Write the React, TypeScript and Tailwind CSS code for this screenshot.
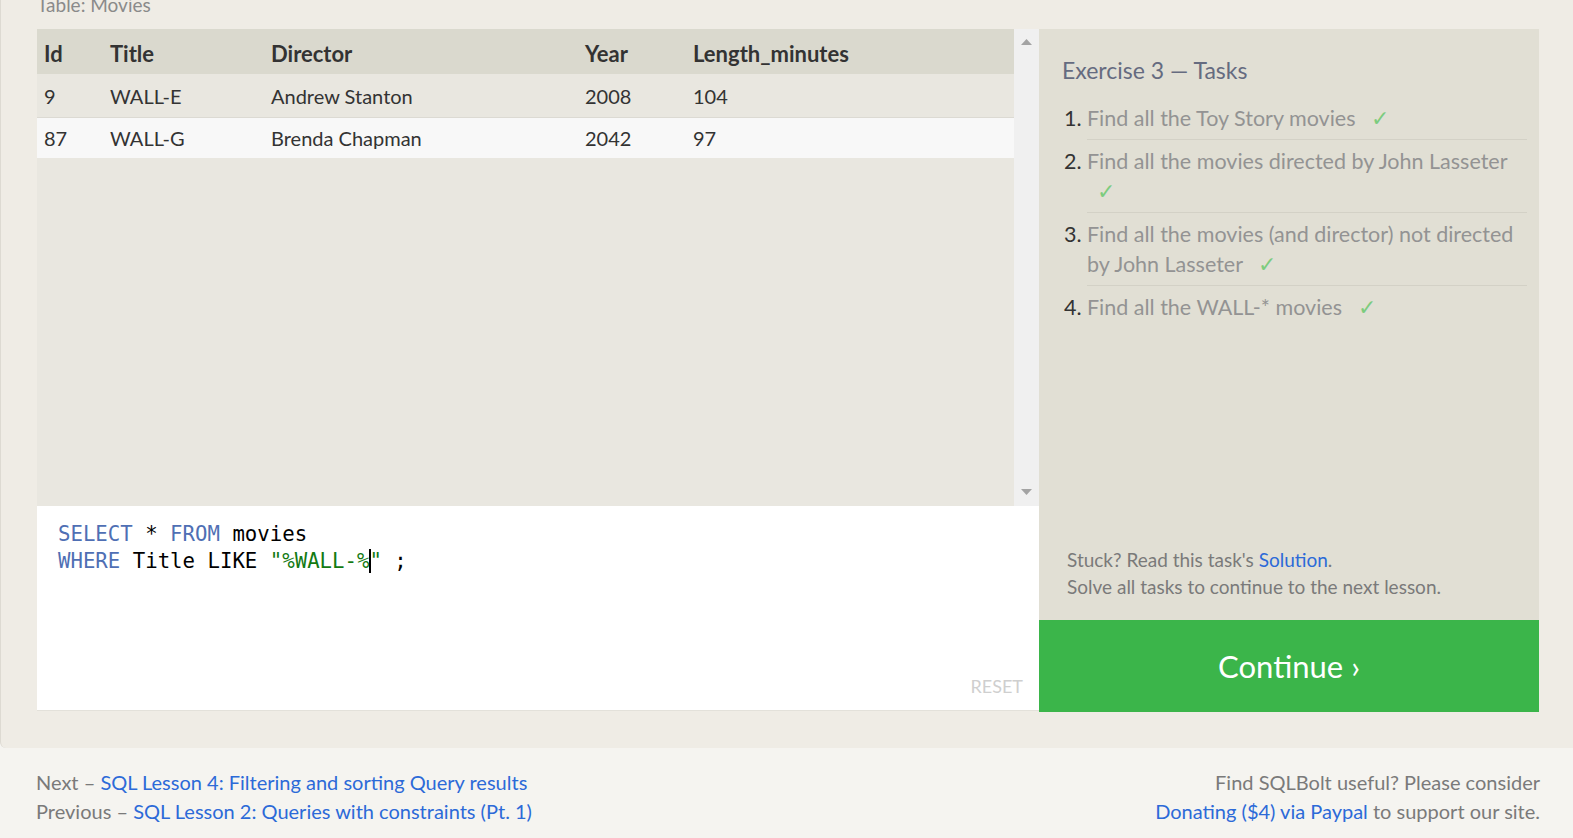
import React from "react"

const rows = [
  { id: "9", title: "WALL-E", director: "Andrew Stanton", year: "2008", len: "104" },
  { id: "87", title: "WALL-G", director: "Brenda Chapman", year: "2042", len: "97" },
]

const tasks = [
  "Find all the Toy Story movies",
  "Find all the movies directed by John Lasseter",
  "Find all the movies (and director) not directed by John Lasseter",
  "Find all the WALL-* movies",
]

function Check() {
  return <span className="ml-[10px] text-[22px] text-[#7ccc7e]">✓</span>
}

function Arrow({ up }: { up?: boolean }) {
  return (
    <svg width="11" height="6" viewBox="0 0 11 6">
      <path d={up ? "M0 6 L5.5 0 L11 6 Z" : "M0 0 L5.5 6 L11 0 Z"} fill="#a3a3a3" />
    </svg>
  )
}

export default function App() {
  const font = { fontFamily: "Lato, 'Open Sans', sans-serif" }
  return (
    <div className="w-[1573px] h-[838px] overflow-hidden bg-[#f5f4f0]" style={font}>
      {/* lesson box */}
      <div className="h-[748px] flex flex-col bg-[#efece5] border-l border-[#dddad2] rounded-bl-md pl-[36px] pr-[34px]">
        <div className="h-[29px] text-[19px] leading-[10px] text-[#8a8a8a]">Table: Movies</div>
        <div className="flex">
          {/* left: table + editor */}
          <div className="w-[1002px] flex flex-col">
            <div className="h-[477px] flex bg-[#e9e7e0]">
              <div className="flex-1 text-[20px] text-[#333]">
                <div className="flex h-[45px] items-center bg-[#dad9ce] font-bold text-[22px] pl-[7px] pt-[3px]">
                  <div className="w-[66px]">Id</div>
                  <div className="w-[161px]">Title</div>
                  <div className="w-[314px]">Director</div>
                  <div className="w-[108px]">Year</div>
                  <div>Length_minutes</div>
                </div>
                {rows.map((r, i) => (
                  <div
                    key={r.id}
                    className={
                      i === 0
                        ? "flex h-[44px] items-center pl-[7px] bg-[#e9e7e0] border-b border-[#dcdad3]"
                        : "flex h-[40px] items-center pl-[7px] bg-[#f8f8f8]"
                    }
                  >
                    <div className="w-[66px]">{r.id}</div>
                    <div className="w-[161px]">{r.title}</div>
                    <div className="w-[314px]">{r.director}</div>
                    <div className="w-[108px]">{r.year}</div>
                    <div>{r.len}</div>
                  </div>
                ))}
              </div>
              <div className="w-[25px] bg-[#f0f0f0] flex flex-col items-center justify-between pt-[10px] pb-[11px]">
                <Arrow up />
                <Arrow />
              </div>
            </div>
            <div className="h-[205px] bg-white border-b border-[#e3e1da] flex flex-col pl-[21px] pr-[16px] pt-[15px] pb-[10px]">
              <div className="text-[20.7px] leading-[27px] text-black" style={{ fontFamily: "'DejaVu Sans Mono', monospace" }}>
                <div>
                  <span className="text-[#4f6fb4]">SELECT</span> * <span className="text-[#4f6fb4]">FROM</span> movies
                </div>
                <div>
                  <span className="text-[#4f6fb4]">WHERE</span> Title LIKE{" "}
                  <span className="text-[#137a13]">"%WALL-%</span>
                  <span className="inline-block w-[2px] h-[24px] bg-black align-[-5px] -mr-[2px]" />
                  <span className="text-[#137a13]">"</span> ;
                </div>
              </div>
              <div className="mt-auto text-right text-[18px] text-[#cfcfcf]">RESET</div>
            </div>
          </div>
          {/* right: tasks */}
          <div className="w-[500px] flex flex-col">
            <div className="h-[591px] bg-[#e1dfd4] flex flex-col pl-[23px] pr-[12px] pt-[24px] pb-[20px]">
              <div className="text-[23px] text-[#656b80]">Exercise 3 — Tasks</div>
              <ol className="mt-[9px] text-[21.5px] leading-[30px]">
                {tasks.map((t, i) => (
                  <li key={t} className="flex">
                    <span className="w-[25px] shrink-0 pl-[2px] pt-[6px] text-[#333]">{i + 1}.</span>
                    <div
                      className={
                        "flex-1 text-[#939393] pt-[6px] pb-[6px] " +
                        (i < tasks.length - 1 ? "border-b border-[#d3d1c6]" : "")
                      }
                    >
                      {t} <Check />
                    </div>
                  </li>
                ))}
              </ol>
              <div className="mt-auto pl-[5px] text-[19px] leading-[27px] text-[#7a7a7a]">
                <div>
                  Stuck? Read this task's <span className="text-[#2c6ad8]">Solution</span>.
                </div>
                <div>Solve all tasks to continue to the next lesson.</div>
              </div>
            </div>
            <div className="h-[92px] bg-[#3bb54a] flex items-center justify-center text-white text-[31px]">
              Continue ›
            </div>
          </div>
        </div>
      </div>
      {/* footer */}
      <div className="flex justify-between pl-[36px] pr-[33px] pt-[20px] text-[20px] leading-[29px] text-[#7a7a7a]">
        <div>
          <div>
            Next – <span className="text-[#2c6ad8]">SQL Lesson 4: Filtering and sorting Query results</span>
          </div>
          <div>
            Previous – <span className="text-[#2c6ad8]">SQL Lesson 2: Queries with constraints (Pt. 1)</span>
          </div>
        </div>
        <div className="text-right">
          <div>Find SQLBolt useful? Please consider</div>
          <div>
            <span className="text-[#2c6ad8]">Donating ($4) via Paypal</span> to support our site.
          </div>
        </div>
      </div>
    </div>
  )
}
